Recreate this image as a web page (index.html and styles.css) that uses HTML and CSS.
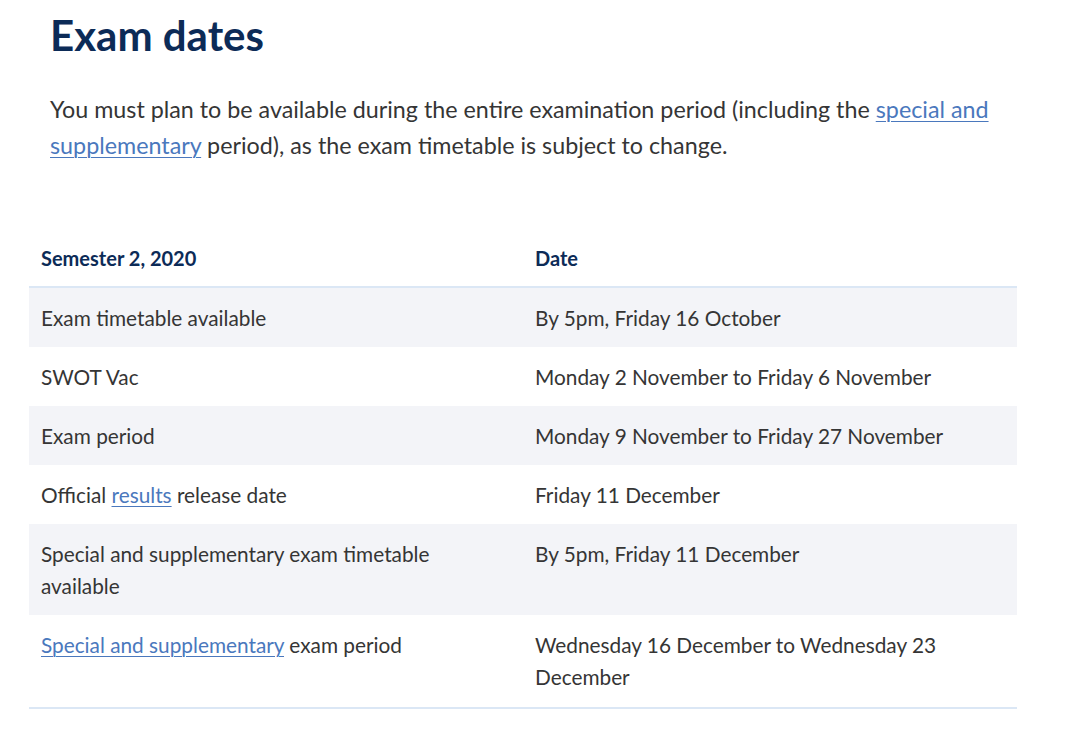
FILE: index.html
```html
<!DOCTYPE html>
<html lang="en">
<head>
<meta charset="utf-8">
<title>Exam dates</title>
<link rel="stylesheet" href="styles.css">
</head>
<body>
<main class="page">
  <h1 class="title">Exam dates</h1>
  <p class="intro">You must plan to be available during the entire examination period (including the <a href="#">special and supplementary</a> period), as the exam timetable is subject to change.</p>
  <table class="dates">
    <thead>
      <tr><th class="c1">Semester 2, 2020</th><th>Date</th></tr>
    </thead>
    <tbody>
      <tr><td>Exam timetable available</td><td>By 5pm, Friday 16 October</td></tr>
      <tr><td>SWOT Vac</td><td>Monday 2 November to Friday 6 November</td></tr>
      <tr><td>Exam period</td><td>Monday 9 November to Friday 27 November</td></tr>
      <tr><td>Official <a href="#">results</a> release date</td><td>Friday 11 December</td></tr>
      <tr><td>Special and supplementary exam timetable available</td><td>By 5pm, Friday 11 December</td></tr>
      <tr><td><a href="#">Special and supplementary</a> exam period</td><td>Wednesday 16 December to Wednesday 23 December</td></tr>
    </tbody>
  </table>
</main>
</body>
</html>
```

FILE: styles.css
```css
html, body {
  margin: 0;
  padding: 0;
  background: #ffffff;
}
body {
  font-family: Lato, "Open Sans", "Liberation Sans", sans-serif;
  color: #353535;
}
.page {
  padding: 9px 0 0 29px;
  width: 988px;
}
.title {
  margin: 0 0 0 21px;
  font-size: 42px;
  line-height: 52px;
  font-weight: 700;
  color: #0c2b57;
}
.intro {
  margin: 30px 0 0 21px;
  font-size: 23.3px;
  line-height: 36px;
  width: 950px;
}
a {
  color: #4a78bd;
  text-decoration: underline;
  text-underline-offset: 3px;
  text-decoration-thickness: 1px;
}
.dates {
  margin-top: 65px;
  width: 988px;
  border-collapse: collapse;
  font-size: 20.8px;
  line-height: 32px;
}
.dates th {
  text-align: left;
  font-size: 20px;
  font-weight: 700;
  color: #0c2b57;
  padding: 14px 12px 12px 12px;
  border-bottom: 2px solid #dbe7f5;
}
.dates th.c1, .dates td:first-child {
  width: 470px;
}
.dates td {
  padding: 14px 12px 13px 12px;
  vertical-align: top;
}
.dates tbody tr:nth-child(odd) {
  background: #f3f4f8;
}
.dates tbody tr:last-child td {
  padding-bottom: 14px;
  border-bottom: 2px solid #dbe7f5;
}
```
